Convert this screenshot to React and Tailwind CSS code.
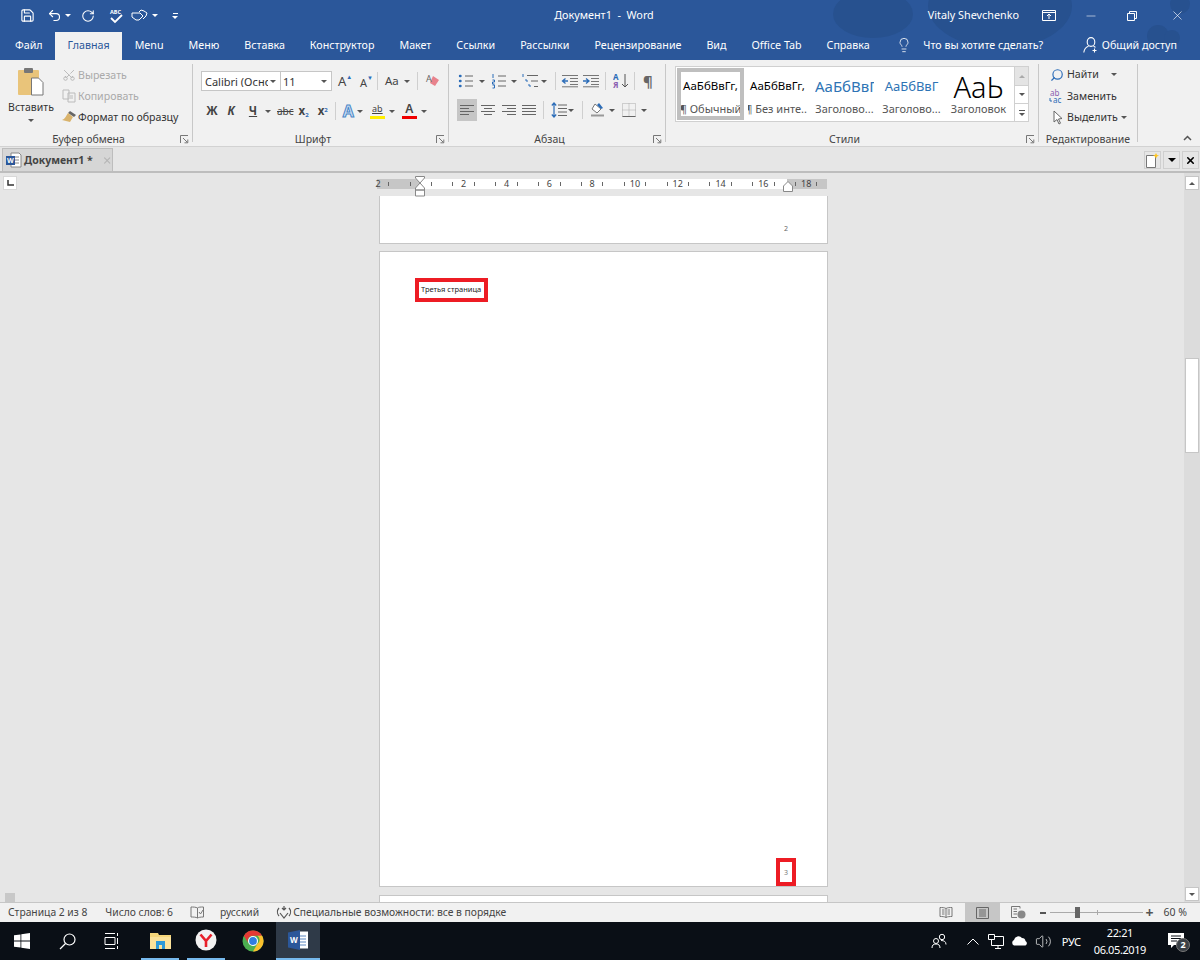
import React from "react";
import {
  Lightbulb,
  Minus,
  RotateCw,
  Save,
  Scissors,
  Search,
  Undo2,
  Volume2,
  X,
} from "lucide-react";

const TABS = ["Menu", "Меню", "Вставка", "Конструктор", "Макет", "Ссылки", "Рассылки", "Рецензирование", "Вид", "Office Tab", "Справка"];

function Caret({ className = "" }) {
  return <span className={`inline-block shrink-0 w-0 h-0 border-x-[3px] border-x-transparent border-t-[3px] border-t-[#555] ${className}`} />;
}

function Launcher() {
  return (
    <svg width="9" height="9" viewBox="0 0 9 9" className="shrink-0">
      <path d="M0.5 8V0.5H8M3 3l4.5 4.5M4.5 7.8h3.3V4.5" fill="none" stroke="#777" strokeWidth="1" />
    </svg>
  );
}

function Divider({ className = "" }) {
  return <span className={`shrink-0 w-px h-[18px] bg-[#cfcfcf] ${className}`} />;
}

function Group({ width, label, launcher, children }) {
  return (
    <div className={`${width} shrink-0 flex flex-col border-r border-[#c8c8c8] my-[4px] relative`}>
      <div className="flex-1 min-h-0">{children}</div>
      <div className={`h-[15px] -mb-[5px] flex items-center justify-center text-[10.5px] text-[#444] relative whitespace-nowrap ${launcher ? "pr-[15px]" : ""}`}>
        {label}
        {launcher && (
          <span className="absolute right-[3px] top-[3px]">
            <Launcher />
          </span>
        )}
      </div>
    </div>
  );
}

function ListIcon({ kind }) {
  return (
    <svg width="20" height="16" viewBox="0 0 20 16" className="shrink-0">
      {kind === "bullets" && <path d="M2 3h.5M2 8h.5M2 13h.5" stroke="#2b6cb8" strokeWidth="2.4" strokeLinecap="round" />}
      {kind === "numbers" && <path d="M2 1v4M1.500 7h2v2h-2v2h2M1.500 12h2v3h-2" stroke="#2b6cb8" strokeWidth="1" fill="none" />}
      {kind === "multi" && <path d="M1 1v3M3 7h2v2M6 12h2v2" stroke="#2b6cb8" strokeWidth="1" fill="none" />}
      <path d={kind === "multi" ? "M5 2.500h11M9 8h7M12 13.500h4" : "M7 3h8M7 8h8M7 13h8"} stroke="#666" strokeWidth="1" />
    </svg>
  );
}

function AlignIcon({ d }) {
  return (
    <svg width="14" height="12" viewBox="0 0 14 12" className="shrink-0">
      <path d={d} stroke="#666" strokeWidth="1" fill="none" />
    </svg>
  );
}

function IndentIcon({ right }) {
  return (
    <svg width="18" height="14" viewBox="0 0 18 14" className="shrink-0">
      <path d="M1 1.500h16M9 4.500h8M9 7.500h8M9 10.500h8M1 12.800h16" stroke="#777" strokeWidth="1" />
      <path d={right ? "M1 7h5M4 4.500 7 7l-3 2.500" : "M7 7H2M4.500 4.500 1.500 7l3 2.500"} stroke="#2b6cb8" strokeWidth="1.300" fill="none" />
    </svg>
  );
}

function StyleItem({ preview, name, selected, previewClass }) {
  return (
    <div className={`w-[67px] shrink-0 h-full flex flex-col items-center overflow-hidden border-[4px] ${selected ? "border-[#bfbfbf]" : "border-white"}`}>
      <div className={`h-[32px] w-full flex items-center justify-center whitespace-nowrap overflow-hidden ${previewClass}`}>{preview}</div>
      <div className="mt-[2px] text-[11px] leading-[14px] text-[#555] whitespace-nowrap">{name}</div>
    </div>
  );
}

function Ruler() {
  const labels = { 0: "2", 8: "2", 12: "4", 16: "6", 20: "8", 24: "10", 28: "12", 32: "14", 36: "16", 40: "18" };
  const cells = Array.from({ length: 42 }, (_, i) => i);
  return (
    <div className="relative w-[450px] h-[10px] ml-[377px] mt-[6px] flex bg-white text-[9px] leading-[10px] text-[#444]">
      <div className="absolute left-0 top-0 w-[43px] h-full bg-[#c6c6c6]" />
      <div className="absolute right-0 top-0 w-[40px] h-full bg-[#c6c6c6]" />
      <div className="relative flex -ml-[4.3px]">
        {cells.map((i) => (
          <div key={i} className="w-[10.71px] shrink-0 flex items-center justify-center">
            {labels[i] ? <span>{labels[i]}</span> : i % 2 === 1 ? <span className="block w-px h-[4px] bg-[#666]" /> : null}
          </div>
        ))}
      </div>
      <svg width="12" height="25" viewBox="0 0 12 25" className="absolute left-[37px] -top-[3px]">
        <path d="M1.500.500h9V2L6 7 1.500 2zM6 7l4.500 5v2h-9v-2zM1.500 14h9v6h-9z" fill="#fff" stroke="#888" />
      </svg>
      <svg width="12" height="12" viewBox="0 0 12 12" className="absolute left-[405px] top-[2px]">
        <path d="M6 .500 10.500 5v5.500h-9V5z" fill="#fff" stroke="#888" />
      </svg>
    </div>
  );
}

function Page2() {
  return (
    <div className="w-[449px] h-[48px] shrink-0 bg-white border-x border-b border-[#c6c6c6] flex justify-end pr-[39px] pt-[28px]">
      <span className="text-[7px] leading-[10px] text-[#666]">2</span>
    </div>
  );
}

function Page3() {
  return (
    <div className="w-[449px] h-[636px] shrink-0 mt-[7px] bg-white border border-[#c6c6c6] flex flex-col justify-between pl-[35px] pt-[26px] pr-[31px]">
      <div className="w-[73px] h-[24px] border-[4px] border-[#ed1c24] flex items-center pl-[2px] text-[7.5px] text-[#222] whitespace-nowrap">Третья страница</div>
      <div className="self-end w-[20px] h-[28px] border-[4px] border-[#ed1c24] flex items-center justify-center text-[7px] text-[#777]">3</div>
    </div>
  );
}

export default function App() {
  return (
    <div className="w-[1200px] h-[960px] overflow-hidden flex flex-col bg-[#e6e6e6] font-['Noto_Sans',sans-serif] text-[11px] leading-none">
      {/* title bar + tabs */}
      <div className="relative h-[60px] bg-[#2b579a] text-white shrink-0">
        <svg width="420" height="60" viewBox="780 0 420 60" className="absolute right-0 top-0">
          <g fill="#27518f">
            <ellipse cx="873" cy="14" rx="40" ry="24" />
            <ellipse cx="1000" cy="6" rx="72" ry="42" />
            <circle cx="1158" cy="36" r="11" />
            <circle cx="1172" cy="38" r="8" />
            <circle cx="1180" cy="4" r="10" />
          </g>
        </svg>
        <div className="relative h-[32px] flex items-center pb-[1px]">
          <div className="flex items-center pl-[20px] w-[400px] shrink-0">
            <Save size={15} strokeWidth={1.8} />
            <Undo2 size={15} strokeWidth={1.8} className="ml-[12px]" />
            <Caret className="ml-[3px] border-t-white" />
            <RotateCw size={14} strokeWidth={1.8} className="ml-[10px]" />
            <svg width="15" height="16" viewBox="0 0 15 16" className="ml-[14px]">
              <text x="1" y="6" fontSize="5.500" fontWeight="700" fill="#fff" fontFamily="Noto Sans">ABC</text>
              <path d="M2 10l4 4 7-7" fill="none" stroke="#fff" strokeWidth="1.800" />
            </svg>
            <svg width="18" height="14" viewBox="0 0 18 14" className="ml-[7px]">
              <path d="M1 4h8l3 3-4 4H5L1 8zM8 3l2-2 3 1 3 2-1 3-3 3" fill="none" stroke="#fff" strokeWidth="1" />
            </svg>
            <Caret className="ml-[3px] border-t-white" />
            <span className="ml-[14px] flex flex-col items-center gap-[2px]">
              <span className="block w-[5px] h-px bg-white" />
              <Caret className="border-t-white" />
            </span>
          </div>
          <div className="w-[408px] shrink-0 text-center text-[10.8px] whitespace-nowrap">Документ1&nbsp; -&nbsp; Word</div>
          <div className="ml-auto flex items-center pr-[15px]">
            <span className="text-[10.8px] whitespace-nowrap">Vitaly Shevchenko</span>
            <svg width="14" height="11" viewBox="0 0 14 11" className="ml-[23px]">
              <path d="M.500.500h13v10H.500zM.500 2.500h13M7 9V4.500M5 6l2-2 2 2" fill="none" stroke="#fff" />
            </svg>
            <Minus size={14} strokeWidth={1} className="ml-[28px]" />
            <svg width="10" height="10" viewBox="0 0 10 10" className="ml-[29px]">
              <path d="M.500 2.500h7v7h-7zM2.500 2.500v-2h7v7h-2" fill="none" stroke="#fff" />
            </svg>
            <X size={15} strokeWidth={1} className="ml-[33px]" />
          </div>
        </div>
        <div className="relative h-[28px] flex items-stretch pl-[2.5px] text-[10.7px] whitespace-nowrap">
          <div className="px-[12.5px] pb-[2px] flex items-center">Файл</div>
          <div className="px-[12.5px] pb-[2px] flex items-center bg-[#f1f1f1] text-[#2b579a]">Главная</div>
          {TABS.map((t) => (
            <div key={t} className="px-[12.5px] pb-[2px] flex items-center">{t}</div>
          ))}
          <div className="ml-[14px] pb-[2px] flex items-center gap-[11px]">
            <Lightbulb size={16} strokeWidth={1.2} />
            <span>Что вы хотите сделать?</span>
          </div>
          <div className="ml-auto pr-[23px] pb-[2px] flex items-center gap-[4px]">
            <svg width="15" height="16" viewBox="0 0 15 16" fill="none" stroke="#fff" strokeWidth="1.100">
              <ellipse cx="8" cy="5" rx="3.800" ry="4.400" />
              <path d="M.800 15.500c.4-3.500 2.400-5.500 4.700-6.300M10.500 9.200c.7.200 1.400.6 2 1.100M11.500 11.500v4M9.500 13.500h4" />
            </svg>
            <span>Общий доступ</span>
          </div>
        </div>
      </div>

      {/* ribbon */}
      <div className="h-[87px] shrink-0 bg-[#f1f1f1] border-b border-[#d2d2d2] flex items-stretch text-[10.6px] text-[#444] relative">
        <Group width="w-[193px]" label="Буфер обмена" launcher>
          <div className="flex">
            <div className="w-[62px] shrink-0 flex flex-col items-center">
              <svg width="28" height="30" viewBox="0 0 28 30" className="mt-[3px]">
                <rect x="1" y="3" width="21" height="25" rx="1" fill="#e9c47a" />
                <rect x="7" y="1" width="9" height="5" rx="1" fill="#777" />
                <path d="M14.500 11h7l4.500 4.500V28H14.500z" fill="#fff" stroke="#777" />
              </svg>
              <span className="mt-[5px] text-[10.5px] text-[#333]">Вставить</span>
              <Caret className="mt-[6px]" />
            </div>
            <div className="flex flex-col pt-[4px] gap-[7px] whitespace-nowrap">
              <div className="h-[14px] flex items-center gap-[2px] text-[#aaa]"><Scissors size={14} strokeWidth={1.3} className="-rotate-90" />Вырезать</div>
              <div className="h-[14px] flex items-center gap-[2px] text-[#aaa]">
                <svg width="14" height="14" viewBox="0 0 14 14"><path d="M1 1h6v9H1zM6 4h7v9H6zM8 7h3M8 9h3" fill="#f1f1f1" stroke="#bbb" /></svg>
                Копировать
              </div>
              <div className="h-[14px] flex items-center gap-[1px] text-[#333] -ml-[1px]">
                <svg width="16" height="14" viewBox="0 0 16 14"><path d="M9 1l6 4-2 2-6-4z" fill="#666" /><path d="M7 3l5 4-3 5-8-2c3-1 4-4 6-7z" fill="#d9b36c" /></svg>
                Формат по образцу
              </div>
            </div>
          </div>
        </Group>

        <Group width="w-[256px]" label="Шрифт" launcher>
          <div className="pl-[8px] pt-[7px] flex flex-col gap-[10px]">
            <div className="h-[20px] flex items-center">
              <div className="w-[80px] shrink-0 h-[20px] bg-white border border-[#c6c6c6] flex items-center pl-[3px] pr-[4px] text-[11px] text-[#333] overflow-hidden whitespace-nowrap">
                <span className="w-[63px] overflow-hidden">Calibri (Осно</span>
                <Caret className="ml-auto" />
              </div>
              <div className="w-[51px] shrink-0 h-[20px] bg-white border border-l-0 border-[#c6c6c6] flex items-center pl-[2px] pr-[4px] text-[11px] text-[#333]">
                11
                <Caret className="ml-auto" />
              </div>
              <div className="ml-[6px] w-[14px] flex items-end text-[13px] text-[#444]">А<span className="text-[#2b6cb8] text-[6px] mb-[8px]">▲</span></div>
              <div className="ml-[8px] w-[14px] flex items-end text-[11px] text-[#444]">А<span className="text-[#2b6cb8] text-[6px] mb-[7px]">▼</span></div>
              <Divider className="ml-[3px]" />
              <span className="ml-[7px] w-[14px] text-[11.5px]">Аа</span>
              <Caret className="ml-[5px]" />
              <Divider className="ml-[7px]" />
              <svg width="16" height="16" viewBox="0 0 16 16" className="ml-[7px] shrink-0">
                <path d="M8 3l6 4-4 6-5-3z" fill="#e8828c" />
                <text x="1" y="9" fontSize="9" fill="#666" fontFamily="Noto Sans">A</text>
              </svg>
            </div>
            <div className="h-[20px] flex items-center text-[#444]">
              <span className="ml-[4px] font-bold text-[11.5px] w-[14px] text-center">Ж</span>
              <span className="ml-[7px] font-bold italic text-[11.5px] w-[10px] text-center">К</span>
              <span className="ml-[12px] font-bold underline text-[11.5px] w-[10px] text-center">Ч</span>
              <Caret className="ml-[7px]" />
              <span className="ml-[6px] line-through text-[10px]">abc</span>
              <span className="ml-[5px] font-bold text-[11.5px]">x<sub className="text-[6px] text-[#2b6cb8]">2</sub></span>
              <span className="ml-[9px] font-bold text-[11.5px]">x<sup className="text-[6px] text-[#2b6cb8]">2</sup></span>
              <Divider className="ml-[7px]" />
              <span className="ml-[7px] text-[16px] font-bold text-[#cfe0f5] [-webkit-text-stroke:1px_#4a87c7]">A</span>
              <Caret className="ml-[3px]" />
              <div className="ml-[7px] flex flex-col items-center w-[15px] shrink-0">
                <span className="text-[9px] leading-[10px] underline">ab</span>
                <span className="mt-[2px] w-[15px] h-[3px] bg-[#ffee00]" />
              </div>
              <Caret className="ml-[4px]" />
              <div className="ml-[7px] flex flex-col items-center w-[15px] shrink-0">
                <span className="text-[12px] leading-[12px] font-semibold">А</span>
                <span className="mt-[1px] w-[15px] h-[3px] bg-[#f00000]" />
              </div>
              <Caret className="ml-[4px]" />
            </div>
          </div>
        </Group>

        <Group width="w-[217px]" label="Абзац" launcher>
          <div className="pl-[9px] pt-[7px] flex flex-col gap-[8px]">
            <div className="h-[20px] flex items-center">
              <ListIcon kind="bullets" />
              <Caret className="ml-[1px]" />
              <span className="ml-[6px]"><ListIcon kind="numbers" /></span>
              <Caret />
              <span className="ml-[5px]"><ListIcon kind="multi" /></span>
              <Caret className="-ml-[1px]" />
              <Divider className="ml-[8px]" />
              <span className="ml-[5px]"><IndentIcon /></span>
              <span className="ml-[3px]"><IndentIcon right /></span>
              <Divider className="ml-[5px]" />
              <svg width="16" height="16" viewBox="0 0 16 16" className="ml-[7px] shrink-0">
                <text x="0" y="7" fontSize="8" fontWeight="700" fill="#2b6cb8" fontFamily="Noto Sans">А</text>
                <text x="0" y="15" fontSize="8" fontWeight="700" fill="#8a5fb0" fontFamily="Noto Sans">Я</text>
                <path d="M12 1v13M9 11l3 3 3-3" fill="none" stroke="#555" />
              </svg>
              <Divider className="ml-[5px]" />
              <span className="ml-[8px] text-[15px] font-bold text-[#666]">¶</span>
            </div>
            <div className="h-[22px] flex items-center -ml-[1px]">
              <div className="w-[20px] shrink-0 h-[22px] bg-[#c6c6c6] flex items-center justify-center">
                <AlignIcon d="M0 1.500h14M0 4.500h9M0 7.500h14M0 10.500h9" />
              </div>
              <span className="ml-[4px]"><AlignIcon d="M0 1.500h14M3 4.500h8M0 7.500h14M3 10.500h8" /></span>
              <span className="ml-[7px]"><AlignIcon d="M0 1.500h14M5 4.500h9M0 7.500h14M5 10.500h9" /></span>
              <span className="ml-[6px]"><AlignIcon d="M0 1.500h14M0 4.500h14M0 7.500h14M0 10.500h14" /></span>
              <Divider className="ml-[7px]" />
              <svg width="16" height="16" viewBox="0 0 16 16" className="ml-[7px] shrink-0">
                <path d="M3 1v14M.800 3.500 3 1l2.200 2.500M.800 12.500 3 15l2.200-2.500" fill="none" stroke="#2b6cb8" strokeWidth="1.200" />
                <path d="M7 3h9M7 6.500h9M7 10h9M7 13.500h9" stroke="#666" />
              </svg>
              <Caret className="ml-[1px]" />
              <Divider className="ml-[8px]" />
              <svg width="16" height="16" viewBox="0 0 16 16" className="ml-[7px] shrink-0">
                <path d="M5 2l6 5-4 4-5-4z" fill="#fff" stroke="#777" />
                <path d="M9 1l4 5-2 1-4-4z" fill="#2b6cb8" />
                <path d="M1 13.500h13" stroke="#999" strokeWidth="2" />
              </svg>
              <Caret className="ml-[3px]" />
              <svg width="14" height="14" viewBox="0 0 14 14" className="ml-[7px] shrink-0">
                <path d="M.500.500h13v13H.500z" fill="none" stroke="#aaa" strokeDasharray="1 1" />
                <path d="M7 .500v13M.500 7h13" stroke="#aaa" strokeDasharray="1 1" />
                <path d="M.500 13.500h13" stroke="#666" />
              </svg>
              <Caret className="ml-[5px]" />
            </div>
          </div>
        </Group>

        <Group width="w-[373px]" label="Стили" launcher>
          <div className="ml-[9px] mt-[2px] w-[354px] h-[56px] bg-white border border-[#d0d0d0] flex">
            <div className="flex p-[1px] flex-1 min-w-0 overflow-hidden">
              <StyleItem selected preview="АаБбВвГг," name="¶ Обычный" previewClass="text-[11.5px] text-black" />
              <StyleItem preview="АаБбВвГг," name="¶ Без инте..." previewClass="text-[11.5px] text-black" />
              <StyleItem preview="АаБбВвГ" name="Заголово..." previewClass="text-[15px] text-[#2e74b5] justify-start" />
              <StyleItem preview="АаБбВвГ" name="Заголово..." previewClass="text-[13px] text-[#2e74b5]" />
              <StyleItem preview="АаЬ" name="Заголовок" previewClass="text-[29px] font-light text-black" />
            </div>
            <div className="w-[14px] shrink-0 border-l border-[#d0d0d0] flex flex-col">
              <div className="h-[19px] bg-[#e4e4e4] flex items-center justify-center border-b border-[#d0d0d0]"><Caret className="rotate-180 border-t-[#aaa]" /></div>
              <div className="h-[18px] flex items-center justify-center border-b border-[#d0d0d0]"><Caret /></div>
              <div className="flex-1 flex flex-col items-center justify-center gap-[2px]"><span className="w-[6px] h-px bg-[#555]" /><Caret /></div>
            </div>
          </div>
        </Group>

        <Group width="w-[99px]" label="Редактирование">
          <div className="pl-[11px] pt-[3px] flex flex-col gap-[6.500px] whitespace-nowrap text-[#333]">
            <div className="h-[15px] flex items-center gap-[3px]"><Search size={14} strokeWidth={2} className="text-[#2b6cb8] -scale-x-100" />Найти<Caret className="ml-[9px]" /></div>
            <div className="h-[15px] flex items-center gap-[2px] -ml-[1px]">
              <svg width="16" height="15" viewBox="0 0 16 15">
                <text x="1" y="6.500" fontSize="8" fill="#8a5fb0" fontFamily="Noto Sans">ab</text>
                <text x="4" y="14" fontSize="8" fill="#2b6cb8" fontFamily="Noto Sans">ac</text>
                <path d="M1 9v3h2" stroke="#2b6cb8" fill="none" />
              </svg>
              Заменить
            </div>
            <div className="h-[15px] flex items-center gap-[4px] pl-[3px]">
              <svg width="10" height="15" viewBox="0 0 10 15"><path d="M1 1v11l3-2.500L6 14l1.500-.800-2-4.200L9 8.500z" fill="#fff" stroke="#666" /></svg>
              Выделить<Caret className="-ml-[1px]" />
            </div>
          </div>
        </Group>

        <div className="ml-auto self-end pr-[8px] pb-[5px]">
          <svg width="9" height="6" viewBox="0 0 9 6"><path d="M1 5l3.500-3.500L8 5" fill="none" stroke="#555" strokeWidth="1.500" /></svg>
        </div>
      </div>

      {/* office tab strip */}
      <div className="h-[26px] shrink-0 bg-[#e6e6e6] border-b-2 border-[#bdbdbd] flex items-end pl-[2px] pr-[1px]">
        <div className="w-[111px] h-[23px] bg-[#d6d6d6] border border-b-0 border-[#bdbdbd] flex items-center pl-[3px] gap-[2px] whitespace-nowrap">
          <svg width="16" height="16" viewBox="0 0 16 16" className="shrink-0">
            <path d="M5 1h8l2 2v12H5z" fill="#fff" stroke="#888" />
            <path d="M8 5h5M8 8h5M8 11h5" stroke="#888" />
            <rect x="0" y="4" width="9" height="9" fill="#2b579a" />
            <text x="1" y="11" fontSize="7" fontWeight="700" fill="#fff" fontFamily="Noto Sans">W</text>
          </svg>
          <span className="text-[10.5px] font-bold text-[#444]">Документ1 *</span>
          <X size={11} strokeWidth={2.5} className="ml-[7px] text-[#b5b5b5]" />
        </div>
        <div className="ml-auto flex gap-[2px] mb-[2px]">
          <div className="w-[17px] h-[18px] border border-[#cfcfcf] flex items-center justify-center">
            <svg width="14" height="15" viewBox="0 0 14 15"><path d="M.500 2.500h9v12h-9z" fill="#fff" stroke="#777" /><path d="M10 0l1 2 2 .500-2 1-1 2-1-2-2-1 2-.500z" fill="#ffc51f" /></svg>
          </div>
          <div className="w-[17px] h-[18px] border border-[#cfcfcf] flex items-center justify-center"><Caret className="border-x-[4px] border-t-[4px] border-t-black" /></div>
          <div className="w-[17px] h-[18px] border border-[#cfcfcf] flex items-center justify-center"><X size={11} strokeWidth={3.5} className="text-black" /></div>
        </div>
      </div>

      {/* document + scrollbar */}
      <div className="flex-1 min-h-0 flex">
        <div className="relative flex-1 min-w-0 flex flex-col overflow-hidden">
          <div className="absolute left-[3px] top-[3px] w-[14px] h-[14px] bg-white border border-[#d8d8d8] flex items-center justify-center">
            <svg width="7" height="6" viewBox="0 0 7 6"><path d="M1 0v5h6" fill="none" stroke="#333" strokeWidth="1.500" /></svg>
          </div>
          <div className="h-[23px] shrink-0"><Ruler /></div>
          <div className="ml-[379px] flex-1 min-h-0 flex flex-col overflow-hidden">
            <Page2 />
            <Page3 />
            <div className="w-[449px] h-[9px] shrink-0 mt-[8px] bg-white border-x border-t border-[#c6c6c6]" />
          </div>
          <div className="absolute left-[5px] bottom-0 w-[10px] h-[9px] bg-[#c8c8c8]" />
        </div>
        <div className="w-[16px] shrink-0 bg-[#dcdcdc] flex flex-col items-center pt-[3px] pb-[1px]">
          <div className="w-[14px] h-[14px] bg-white border border-[#c6c6c6] flex items-center justify-center"><Caret className="rotate-180" /></div>
          <div className="mt-[168px] w-[14px] h-[95px] bg-white border border-[#c6c6c6]" />
          <div className="mt-auto w-[14px] h-[14px] bg-white border border-[#c6c6c6] flex items-center justify-center"><Caret /></div>
        </div>
      </div>

      {/* status bar */}
      <div className="h-[20px] shrink-0 bg-[#f1f1f1] border-t border-[#c6c6c6] flex items-center text-[10.3px] text-[#444] whitespace-nowrap">
        <span className="ml-[8px]">Страница 2 из 8</span>
        <span className="ml-[18px]">Число слов: 6</span>
        <svg width="15" height="13" viewBox="0 0 15 13" className="ml-[17px]"><path d="M7.500 2C6 1 3 1 1 1v10c2 0 5 0 6.500 1 1-.600 3-1 6-1V1c-3 0-5 0-6 1zM7.500 2v10M9 6l1.500 2L13 4" fill="none" stroke="#777" /></svg>
        <span className="ml-[15px]">русский</span>
        <svg width="16" height="15" viewBox="0 0 16 15" className="ml-[17px]"><path d="M3 3a6 6 0 0 0 0 8M13 3a6 6 0 0 1 0 8M8 1v3M6 3l2 2 2-2M4 8l4 5 4-5" fill="none" stroke="#555" strokeWidth="1.200" /></svg>
        <span className="ml-[1px]">Специальные возможности: все в порядке</span>
        <div className="ml-auto flex items-stretch h-full">
          <span className="flex items-center mr-[12px]">
            <svg width="14" height="11" viewBox="0 0 14 11"><path d="M7 1.500C5.500.500 3 .500 1 .500v9c2 0 4.500 0 6 1 1.500-1 4-1 6-1v-9c-2 0-4.500 0-6 1zM7 1.500v9M3 3h2.500M3 5h2.500M3 7h2.500M8.500 3H11M8.500 5H11M8.500 7H11" fill="none" stroke="#777" /></svg>
          </span>
          <span className="w-[35px] bg-[#c6c6c6] flex items-center justify-center">
            <svg width="13" height="12" viewBox="0 0 13 12"><path d="M.500.500h12v11H.500zM3 3h7M3 5h7M3 7h7M3 9h7" fill="none" stroke="#666" /></svg>
          </span>
          <span className="flex items-center ml-[11px]">
            <svg width="15" height="13" viewBox="0 0 15 13"><path d="M.500.500H9v2M.500.500v11H6M2.500 3H6M2.500 5.500H6M2.500 8H6" fill="none" stroke="#777" /><circle cx="10.500" cy="8.500" r="4" fill="#888" /></svg>
          </span>
          <span className="ml-[14px] flex items-center">
            <span className="w-[6px] h-[2px] bg-[#555]" />
            <span className="relative ml-[4px] w-[93px] h-px bg-[#aaa]">
              <span className="absolute left-[25px] -top-[5px] w-[5px] h-[11px] bg-[#666]" />
              <span className="absolute left-[47px] -top-[2px] w-px h-[5px] bg-[#aaa]" />
            </span>
            <span className="ml-[3px] text-[14px] font-bold text-[#555]">+</span>
          </span>
          <span className="ml-[10px] mr-[13px] flex items-center text-[10.5px]">60 %</span>
        </div>
      </div>

      {/* taskbar */}
      <div className="h-[38px] shrink-0 bg-[#0a0f16] flex items-stretch text-white">
        <div className="w-[43px] flex items-center justify-center">
          <svg width="16" height="16" viewBox="0 0 16 16" fill="#fff"><path d="M0 2.300 6.500 1.400v6.200H0zM7.300 1.300 16 0v7.600H7.300zM0 8.400h6.500v6.200L0 13.700zM7.300 8.400H16V16l-8.700-1.300z" /></svg>
        </div>
        <div className="w-[48px] flex items-center justify-center">
          <svg width="17" height="17" viewBox="0 0 17 17" fill="none" stroke="#fff" strokeWidth="1.200"><circle cx="10.500" cy="6.500" r="5.500" /><path d="M6.500 10.500 1 16" /></svg>
        </div>
        <div className="w-[42px] flex items-center justify-center">
          <svg width="16" height="16" viewBox="0 0 16 16" fill="none" stroke="#fff"><path d="M1 .500h10M1 15.500h10M1 4.500h10v7H1zM13.500 0v3M13.500 5v6M13.500 13v3" /></svg>
        </div>
        <div className="w-[38px] ml-[8px] border-b-[2px] border-[#76b9ed] flex items-center justify-center">
          <svg width="21" height="18" viewBox="0 0 21 18"><path d="M0 2h8l1 2h12v14H0z" fill="#f5d67a" /><path d="M0 6h21v12H0z" fill="#fbe29a" /><path d="M6 10h9v8H6z" fill="#2d9ad8" /><path d="M9 14h3v4H9z" fill="#fbe29a" /></svg>
        </div>
        <div className="w-[38px] ml-[8px] border-b-[2px] border-[#76b9ed] flex items-center justify-center">
          <svg width="22" height="22" viewBox="0 0 22 22"><circle cx="11" cy="11" r="10.500" fill="#f2f2f2" /><path d="M5.500 5.500 11 12v6M16.500 5.500 11 12" fill="none" stroke="#e8202a" strokeWidth="2.600" /></svg>
        </div>
        <div className="w-[46px] ml-[5px] flex items-center justify-center">
          <svg width="22" height="22" viewBox="0 0 22 22">
            <circle cx="11" cy="11" r="10.500" fill="#4caf50" />
            <path d="M1.900 5.750A10.500 10.500 0 0 1 20.100 5.750H11a5 5 0 0 0-4.800 7.200z" fill="#e53935" />
            <path d="M20.100 5.750A10.500 10.500 0 0 1 11 21.500l4.300-7.500a5 5 0 0 0 .2-8.250z" fill="#fbc02d" />
            <circle cx="11" cy="11" r="5" fill="#fff" />
            <circle cx="11" cy="11" r="3.900" fill="#2f7de1" />
          </svg>
        </div>
        <div className="w-[44px] bg-[#2f3a48] border-b-[2px] border-[#76b9ed] flex items-center justify-center">
          <svg width="22" height="20" viewBox="0 0 22 20">
            <path d="M8 1.500h13v17H8z" fill="#fff" />
            <path d="M13 6h6M13 9h6M13 12h6M13 15h6" stroke="#5a86c0" />
            <path d="M1 2.500 13 0v20L1 17.500z" fill="#2b579a" />
            <text x="3" y="13" fontSize="8" fontWeight="700" fill="#fff" fontFamily="Noto Sans">W</text>
          </svg>
        </div>
        <div className="ml-auto flex items-center pr-[15px]">
          <svg width="16" height="16" viewBox="0 0 16 16" fill="none" stroke="#fff" strokeWidth="1"><circle cx="11" cy="4" r="2.700" /><circle cx="5" cy="8" r="2.500" /><path d="M1 15c0-3 1.500-4 4-4s4 1 4 4M10 7.500c3 0 5 1 5 4" /></svg>
          <svg width="12" height="7" viewBox="0 0 12 7" fill="none" stroke="#fff" className="ml-[20px]"><path d="M.500 6.500 6 1l5.500 5.500" /></svg>
          <svg width="16" height="15" viewBox="0 0 16 15" fill="none" stroke="#fff" className="ml-[9px]"><path d="M3.500 2.500h12v9h-12zM7 14.500h6M10 11.500v3" /><path d="M.500.500h6v5h-6z" fill="#0a0f16" /><path d="M3.500 5.500v3" /></svg>
          <svg width="17" height="10" viewBox="0 0 17 10" className="ml-[7px]"><path d="M3 9.500a3 3 0 0 1 0-5.500 4.500 4.500 0 0 1 8-2 3.500 3.500 0 0 1 3.500 3 2.500 2.500 0 0 1 0 4.500z" fill="#fff" /></svg>
          <Volume2 size={17} strokeWidth={1} className="ml-[7px]" />
          <span className="ml-[10px] text-[11px] tracking-[-0.3px]">РУС</span>
          <div className="ml-[13px] flex flex-col items-center gap-[5px] text-[11px] leading-[12px] tracking-[-0.4px]">
            <span>22:21</span>
            <span>06.05.2019</span>
          </div>
          <div className="relative ml-[22px] w-[17px] h-[17px]">
            <svg width="16" height="16" viewBox="0 0 16 16"><path d="M0 0h16v12H6l-3 3v-3H0z" fill="#fff" /><path d="M3 3h10M3 5.500h10M3 8h6" stroke="#0a0f16" /></svg>
            <span className="absolute left-[8px] top-[5px] w-[14px] h-[14px] rounded-full bg-[#3a3f45] border border-[#777] flex items-center justify-center text-[9px] font-bold">2</span>
          </div>
        </div>
      </div>
    </div>
  );
}
